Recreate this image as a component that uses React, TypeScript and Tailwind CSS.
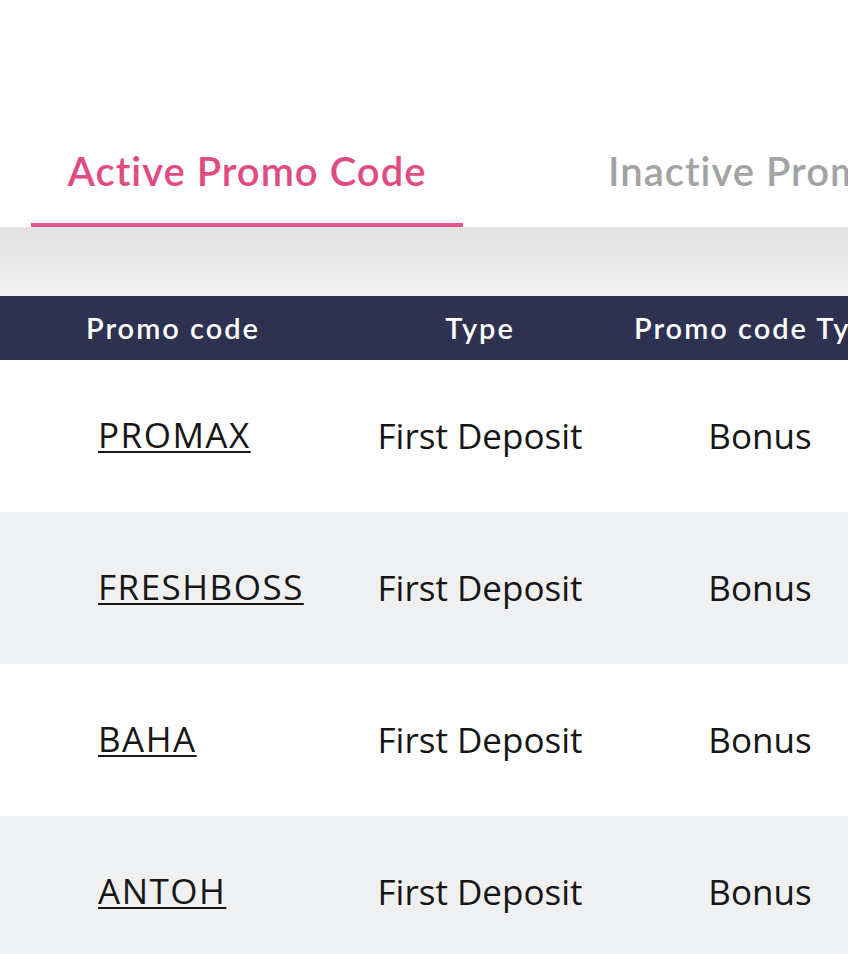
import React from "react";

const rows = [
  { code: "PROMAX", type: "First Deposit", kind: "Bonus" },
  { code: "FRESHBOSS", type: "First Deposit", kind: "Bonus" },
  { code: "BAHA", type: "First Deposit", kind: "Bonus" },
  { code: "ANTOH", type: "First Deposit", kind: "Bonus" },
];

export default function App() {
  return (
    <div className="min-h-screen w-full bg-white">
      <div className="w-[848px] h-[954px] overflow-hidden bg-white">
        {/* tabs */}
        <div className="h-[227px] flex items-end font-['Lato',sans-serif] font-semibold text-[40px] leading-none tracking-[1px] whitespace-nowrap">
          <div className="ml-[31px] w-[432px] shrink-0 flex flex-col items-center">
            <span className="text-[#e04b83] pb-[32px]">Active Promo Code</span>
            <div className="w-full h-[4px] bg-[#e05589]" />
          </div>
          <div className="ml-[145px] shrink-0">
            <span className="block text-[#a3a3a3] pb-[36px]">Inactive Promo Code</span>
          </div>
        </div>

        {/* shaded strip */}
        <div className="h-[69px] bg-gradient-to-b from-[#e2e2e2] to-[#f1f1f1]" />

        {/* table */}
        <div className="w-[906px]">
          <div className="grid grid-cols-[346px_268px_292px] h-[64px] items-center bg-[#2f3151] text-white font-['Lato',sans-serif] font-semibold text-[29px] tracking-[2px] whitespace-nowrap">
            <div className="text-center">Promo code</div>
            <div className="text-center">Type</div>
            <div className="text-center">Promo code Type</div>
          </div>
          {rows.map((r, i) => (
            <div
              key={r.code}
              className={
                "grid grid-cols-[346px_268px_292px] h-[152px] items-center font-['Open_Sans',sans-serif] text-[35px] text-[#161616] " +
                (i % 2 === 1 ? "bg-[#eff0f1]" : "bg-white")
              }
            >
              <div className="pl-[98px] pb-[2px]">
                <span className="underline decoration-2 underline-offset-[3px] tracking-[1.5px]">{r.code}</span>
              </div>
              <div className="text-center">{r.type}</div>
              <div className="text-center">{r.kind}</div>
            </div>
          ))}
        </div>
      </div>
    </div>
  );
}
